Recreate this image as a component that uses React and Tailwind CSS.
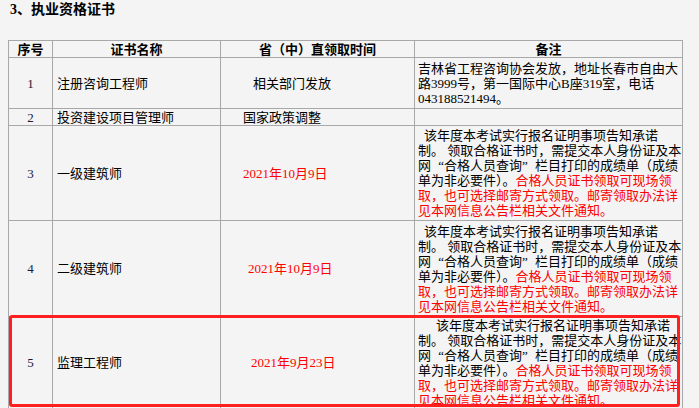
const FONT = '"Liberation Serif", "Noto Sans CJK SC", serif';

const notice = (indent) => (
  <div className="leading-[15px] whitespace-nowrap">
    <div style={{ paddingLeft: indent }}>该年度本考试实行报名证明事项告知承诺</div>
    <div>制。 领取合格证书时，需提交本人身份证及本</div>
    <div>
      网<span className="inline-block w-[13px] text-right">“</span>合格人员查询
      <span className="inline-block w-[13px] text-left">”</span>栏目打印的成绩单（成绩
    </div>
    <div>
      单为非必要件）。<span className="text-[#ff0000]">合格人员证书领取可现场领</span>
    </div>
    <div className="text-[#ff0000]">取，也可选择邮寄方式领取。邮寄领取办法详</div>
    <div className="text-[#ff0000]">见本网信息公告栏相关文件通知。</div>
  </div>
);

const rows = [
  {
    no: "1",
    name: "注册咨询工程师",
    time: "相关部门发放",
    timePad: "pl-[32px]",
    red: false,
    h: "h-[51px]",
    note: (
      <div className="leading-[15px] whitespace-nowrap">
        <div>吉林省工程咨询协会发放，地址长春市自由大</div>
        <div>路3999号，第一国际中心B座319室，电话</div>
        <div>043188521494。</div>
      </div>
    ),
  },
  { no: "2", name: "投资建设项目管理师", time: "国家政策调整", timePad: "pl-[22px]", red: false, h: "h-[17px]", note: null },
  { no: "3", name: "一级建筑师", time: "2021年10月9日", timePad: "pl-[22px]", red: true, h: "h-[95px]", note: notice(6) },
  { no: "4", name: "二级建筑师", time: "2021年10月9日", timePad: "pl-[27px]", red: true, h: "h-[96px]", note: notice(6) },
  { no: "5", name: "监理工程师", time: "2021年9月23日", timePad: "pl-[30px]", red: true, h: "h-[92px]", note: notice(18) },
];

const cell = "border border-[#a8a8a8] align-middle";

export default function App() {
  return (
    <div
      className="relative w-[699px] h-[408px] overflow-hidden bg-[#f4f4f4] text-[13px] text-black"
      style={{ fontFamily: FONT }}
      lang="zh-CN"
    >
      <div className="h-[40px] pl-[10px] pt-[1px] text-[14px] font-bold leading-[18px]">3、执业资格证书</div>
      <table className="ml-[8px] w-[674px] table-fixed border-collapse">
        <colgroup>
          <col className="w-[44px]" />
          <col className="w-[168px]" />
          <col className="w-[194px]" />
          <col className="w-[268px]" />
        </colgroup>
        <thead>
          <tr className="h-[17px] font-bold leading-[15px]">
            <th className={cell}>序号</th>
            <th className={cell}>证书名称</th>
            <th className={cell}>省（中）直领取时间</th>
            <th className={cell}>备注</th>
          </tr>
        </thead>
        <tbody>
          {rows.map((r) => (
            <tr key={r.no} className={`${r.h} leading-[15px]`}>
              <td className={`${cell} text-center text-[#1a1a3a]`}>{r.no}</td>
              <td className={`${cell} pl-[4px] whitespace-nowrap`}>{r.name}</td>
              <td className={`${cell} ${r.timePad} whitespace-nowrap ${r.red ? "text-[#ff0000]" : ""}`}>
                {r.time}
              </td>
              <td className={`${cell} px-[3px] py-0`}>{r.note}</td>
            </tr>
          ))}
        </tbody>
      </table>
      <div className="absolute left-[9px] top-[315px] h-[92px] w-[671px] rounded-[3px] border-[3px] border-[#ff1f1f]" />
    </div>
  );
}
